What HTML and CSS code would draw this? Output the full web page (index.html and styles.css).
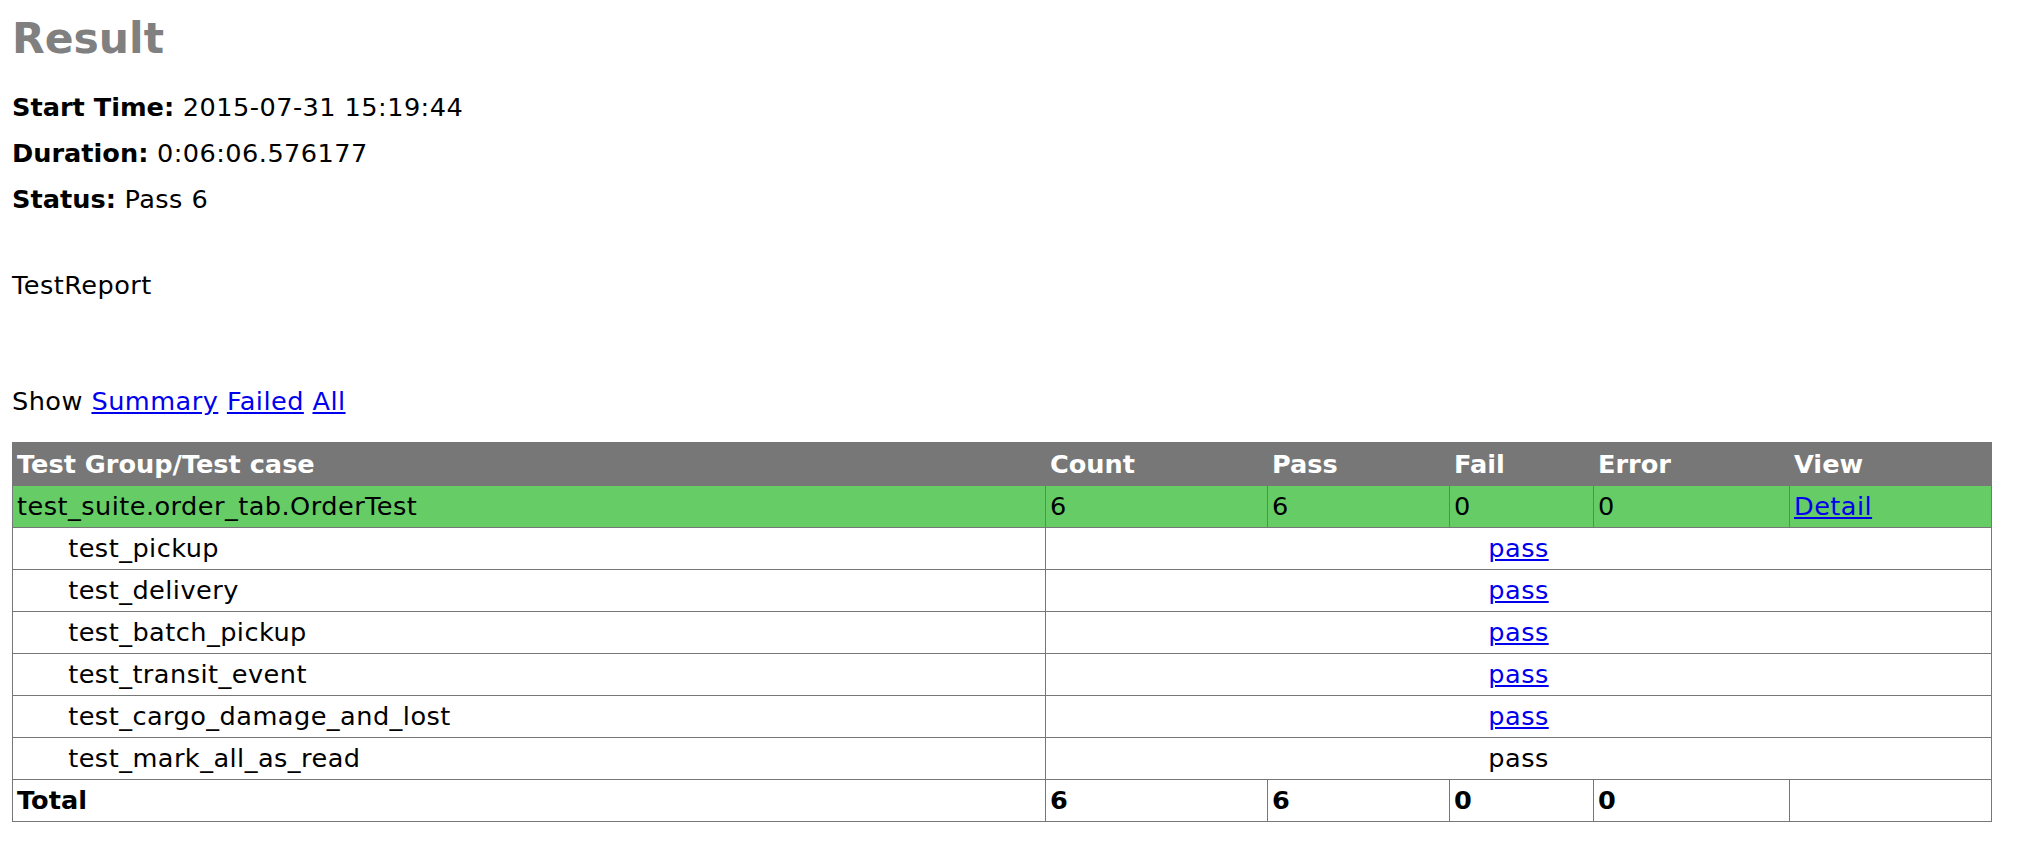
FILE: index.html
```html
<!DOCTYPE html>
<html lang="en">
<head>
<meta charset="utf-8">
<title>Result</title>
<link rel="stylesheet" href="styles.css">
</head>
<body>
<div class="page">
  <div class="heading">
    <h1 class="title">Result</h1>
    <p class="attribute"><strong>Start Time:</strong> 2015-07-31 15:19:44</p>
    <p class="attribute"><strong>Duration:</strong> 0:06:06.576177</p>
    <p class="attribute"><strong>Status:</strong> Pass 6</p>
    <p class="description">TestReport</p>
  </div>
  <p class="show-line">Show <a class="link" href="#">Summary</a> <a class="link" href="#">Failed</a> <a class="link" href="#">All</a></p>
  <table class="result-table">
    <colgroup>
      <col class="col-name">
      <col class="col-count">
      <col class="col-pass">
      <col class="col-fail">
      <col class="col-error">
      <col class="col-view">
    </colgroup>
    <tr class="header-row">
      <td>Test Group/Test case</td>
      <td>Count</td>
      <td>Pass</td>
      <td>Fail</td>
      <td>Error</td>
      <td>View</td>
    </tr>
    <tr class="pass-class">
      <td>test_suite.order_tab.OrderTest</td>
      <td>6</td>
      <td>6</td>
      <td>0</td>
      <td>0</td>
      <td><a class="link" href="#">Detail</a></td>
    </tr>
    <tr class="case-row">
      <td><div class="testcase">test_pickup</div></td>
      <td colspan="5" class="status-cell"><a class="link" href="#">pass</a></td>
    </tr>
    <tr class="case-row">
      <td><div class="testcase">test_delivery</div></td>
      <td colspan="5" class="status-cell"><a class="link" href="#">pass</a></td>
    </tr>
    <tr class="case-row">
      <td><div class="testcase">test_batch_pickup</div></td>
      <td colspan="5" class="status-cell"><a class="link" href="#">pass</a></td>
    </tr>
    <tr class="case-row">
      <td><div class="testcase">test_transit_event</div></td>
      <td colspan="5" class="status-cell"><a class="link" href="#">pass</a></td>
    </tr>
    <tr class="case-row">
      <td><div class="testcase">test_cargo_damage_and_lost</div></td>
      <td colspan="5" class="status-cell"><a class="link" href="#">pass</a></td>
    </tr>
    <tr class="case-row">
      <td><div class="testcase">test_mark_all_as_read</div></td>
      <td colspan="5" class="status-cell">pass</td>
    </tr>
    <tr class="total-row">
      <td>Total</td>
      <td>6</td>
      <td>6</td>
      <td>0</td>
      <td>0</td>
      <td>&nbsp;</td>
    </tr>
  </table>
</div>
</body>
</html>
```

FILE: styles.css
```css
html, body {
  margin: 0;
  padding: 0;
  background: #ffffff;
}

body {
  font-family: "DejaVu Sans", Verdana, "Liberation Sans", sans-serif;
  font-size: 25.6px;
  letter-spacing: 0.45px;
  color: #000000;
}

.page {
  padding: 14px 12px 0 12px;
}

.heading {
  display: flex;
  flex-direction: column;
  gap: 16px;
}

.title {
  margin: 0 0 12px 0;
  font-size: 42.5px;
  line-height: 50px;
  font-weight: bold;
  letter-spacing: 0;
  color: #808080;
}

.attribute {
  margin: 0;
  line-height: 30px;
}

.attribute strong {
  font-weight: bold;
  letter-spacing: 0;
}

.description {
  margin: 40px 0 0 0;
  line-height: 30px;
}

.show-line {
  margin: 86px 0 0 0;
  line-height: 30px;
}

.link {
  color: #0000ee;
  text-decoration: underline;
}

.result-table {
  margin-top: 26px;
  width: 1980px;
  table-layout: fixed;
  border-collapse: collapse;
  border: 1px solid #777777;
  font-size: 25.6px;
}

.col-name { width: 1033px; }
.col-count { width: 222px; }
.col-pass { width: 182px; }
.col-fail { width: 144px; }
.col-error { width: 196px; }
.col-view { width: 202px; }

.result-table td {
  border: 1px solid #777777;
  padding: 5px 4px;
  line-height: 31px;
  white-space: nowrap;
}

.header-row td {
  font-weight: bold;
  letter-spacing: 0;
  color: #ffffff;
  background-color: #777777;
  line-height: 32px;
}

.pass-class td {
  background-color: #66cc66;
}

.testcase {
  margin-left: 2em;
}

.status-cell {
  text-align: center;
}

.total-row td {
  font-weight: bold;
  letter-spacing: 0;
}
```
